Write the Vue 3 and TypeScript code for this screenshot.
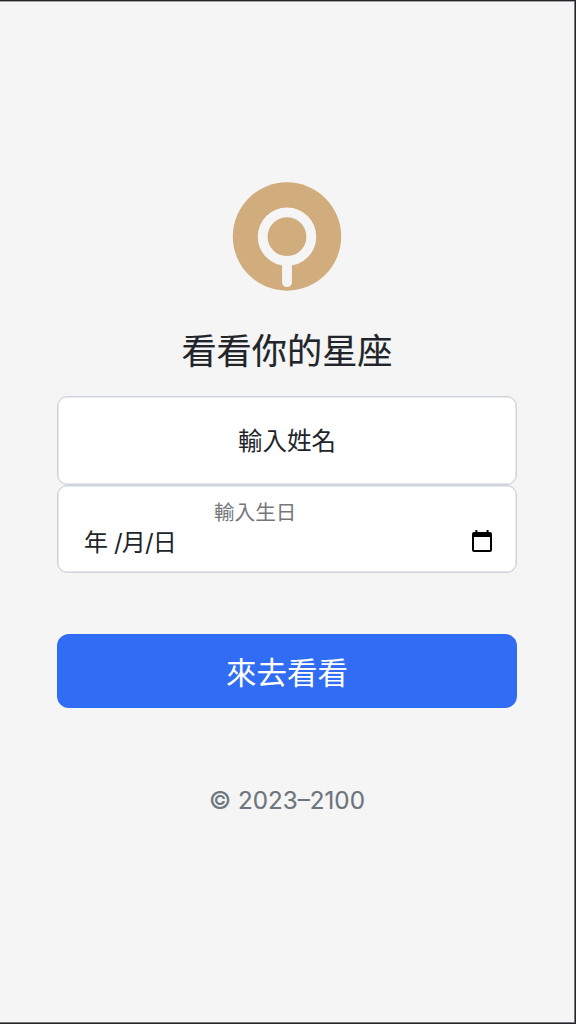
<script setup lang="ts">
import { ref } from 'vue'
const title = ref('看看你的星座')
</script>

<template>
  <main class="page">
    <form class="form" @submit.prevent>
      <svg class="logo" viewBox="0 0 110 110" aria-hidden="true">
        <circle cx="55" cy="55.5" r="54.2" fill="#d1ad7e" />
        <circle cx="55" cy="55.7" r="24.3" fill="none" stroke="#f5f5f5" stroke-width="9.8" />
        <path d="M55 80V101.2" stroke="#f5f5f5" stroke-width="9.8" stroke-linecap="round" />
      </svg>
      <h1>{{ title }}</h1>
      <div class="field name">輸入姓名</div>
      <div class="field birthday">
        <label>輸入生日</label>
        <div class="date-row">
          <span class="date">年 <i>/</i>月<i>/</i>日</span>
          <svg class="calendar" viewBox="0 0 20 22" aria-hidden="true">
            <path fill="#000" fill-rule="evenodd" d="M2 2H3.4V0H5.4V2H14.6V0H16.6V2H18Q20 2 20 4V20Q20 22 18 22H2Q0 22 0 20V4Q0 2 2 2ZM2 7V20H18V7Z" />
          </svg>
        </div>
      </div>
      <button type="submit">來去看看</button>
      <footer>© 2023–2100</footer>
    </form>
  </main>
</template>

<style>
body { margin: 0; background: #f5f5f5; }
</style>
<style scoped>
.page {
  box-sizing: border-box;
  height: 1024px;
  border: 1px solid #222429;
  border-left: 0;
  border-right-width: 1px;
  box-shadow: inset -1px -1px #77777a, inset 0 1px #a5a5a7;
  background: #f5f5f5;
  color: #212529;
  font-family: Inter, "Noto Sans CJK TC", sans-serif;
  padding: 180px 57px 0;
}
.form { display: flex; flex-direction: column; width: 460px; }
.logo { width: 110px; height: 110px; align-self: center; }
h1 { margin: 37px 0 21px; font-size: 35.2px; line-height: 47px; font-weight: 400; text-align: center; -webkit-text-stroke: 0.15px #212529; }
.field { box-sizing: border-box; border: 1px solid #ced4da; box-shadow: inset 0 0 0 0.5px #ced4da; border-radius: 10px; background: #fff; font-size: 24.5px; }
.name { height: 89px; line-height: 88px; text-align: center; }
.birthday { height: 88px; padding: 14px 24px 0 26px; }
label { display: block; padding-left: 130px; font-size: 20.6px; line-height: 26px; color: #75777a; }
.date-row { display: flex; align-items: center; justify-content: space-between; height: 34px; line-height: 34px; }
.date { font-size: 24px; letter-spacing: -0.9px; }
.date i { font-style: normal; letter-spacing: -0.8px; }
.date i:first-child { margin-left: 1px; }
.calendar { width: 20px; height: 22px; margin-top: -4px; }
button { height: 74px; margin: 61px 0 0; padding: 3px 0 0; border: 0; border-radius: 12px; background: #316cf4; color: #fff; font: 400 30.5px/71px Inter, "Noto Sans CJK TC", sans-serif; }
footer { margin-top: 75px; text-align: center; font-size: 24.2px; line-height: 36px; color: #6c757d; -webkit-text-stroke: 0.15px #6c757d; }
</style>
